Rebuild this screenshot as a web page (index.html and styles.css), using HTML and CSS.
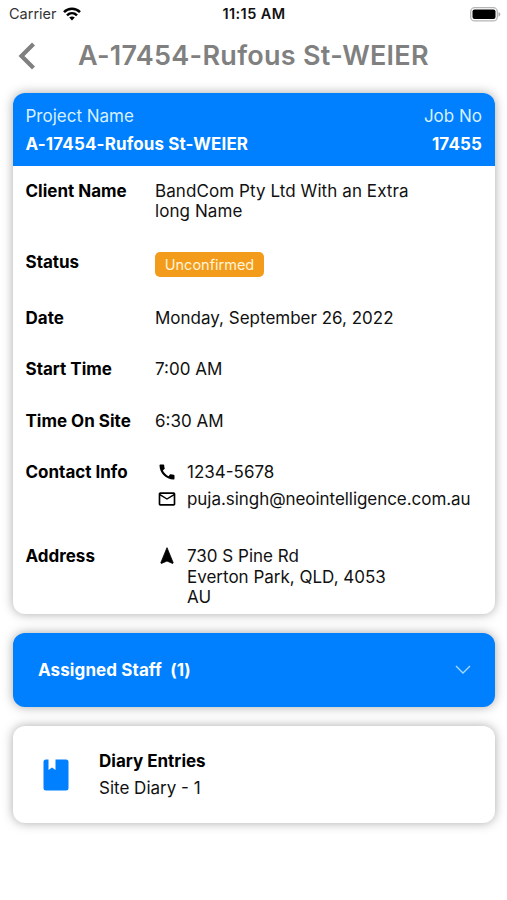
FILE: index.html
```html
<!DOCTYPE html>
<html lang="en">
<head>
<meta charset="utf-8">
<title>Job Details</title>
<link rel="stylesheet" href="styles.css">
</head>
<body>
<div class="status-bar">
  <div class="carrier"><span>Carrier</span>
    <svg class="wifi" viewBox="0 0 18 14" fill="none" stroke="#000" stroke-width="2.5"><path d="M1 5.1C5.5.6 12.500.6 17 5.100"/><path d="M4 8.400c2.900-2.800 7.100-2.800 10 0"/><path d="M6.200 10.500c1.700-1.500 3.900-1.500 5.600 0L9 13.400z" fill="#000" stroke="none"/></svg>
  </div>
  <div class="clock">11:15 AM</div>
  <svg class="battery" viewBox="0 0 31 15"><rect x=".7" y=".7" width="26.600" height="13.200" rx="4" fill="#fff" stroke="#b5b5b5" stroke-width="1.300"/><rect x="2.500" y="2.500" width="23" height="9.600" rx="2" fill="#000"/><path d="M28.500 5c2.400.8 2.400 3.900 0 4.700z" fill="#aaa"/></svg>
</div>
<header class="title-bar">
  <svg class="back" viewBox="0 0 18 28" fill="none" stroke="#808080" stroke-width="4.200"><path d="M15.500 2 3.500 14l12 12"/></svg>
  <h1>A-17454-Rufous St-WEIER</h1>
</header>
<main>
  <section class="card job">
    <div class="job-head">
      <div><div class="caption">Project Name</div><div class="strong"><span class="project">A-17454-Rufous St-WEIER</span></div></div>
      <div class="right"><div class="caption">Job No</div><div class="strong"><span class="number">17455</span></div></div>
    </div>
    <dl class="details">
      <dt>Client Name</dt><dd class="client">BandCom Pty Ltd With an Extra<br>long Name</dd>
      <dt>Status</dt><dd><span class="badge">Unconfirmed</span></dd>
      <dt>Date</dt><dd>Monday, September 26, 2022</dd>
      <dt>Start Time</dt><dd>7:00 AM</dd>
      <dt>Time On Site</dt><dd>6:30 AM</dd>
      <dt>Contact Info</dt>
      <dd>
        <div class="line contact"><svg viewBox="0 0 24 24"><path d="M20.010 15.380c-1.230 0-2.420-.2-3.530-.56-.35-.12-.74-.03-1.010.24l-1.570 1.970c-2.830-1.350-5.480-3.900-6.890-6.830l1.950-1.660c.27-.28.35-.67.24-1.020-.37-1.110-.56-2.300-.56-3.530 0-.54-.45-.99-.99-.99H4.190C3.650 3 3 3.240 3 3.990 3 13.280 10.730 21 20.010 21c.71 0 .99-.63.99-1.180v-3.450c0-.54-.45-.99-.99-.99z"/></svg><span>1234-5678</span></div>
        <div class="line contact"><svg viewBox="0 0 24 24"><path d="M22 6c0-1.100-.9-2-2-2H4c-1.100 0-2 .9-2 2v12c0 1.100.9 2 2 2h16c1.100 0 2-.9 2-2V6zm-2 0-8 5-8-5h16zm0 12H4V8l8 5 8-5v10z"/></svg><span class="email">puja.singh@neointelligence.com.au</span></div>
      </dd>
      <dt>Address</dt>
      <dd><div class="line"><svg viewBox="0 0 24 24"><path d="M12 2 4.500 20.290l.71.71L12 18l6.790 3 .71-.71z" stroke="#000"/></svg><span>730 S Pine Rd<br>Everton Park, QLD, 4053<br>AU</span></div></dd>
    </dl>
  </section>
  <section class="card staff">
    <span>Assigned Staff&nbsp; (1)</span>
    <svg viewBox="0 0 16 10" fill="none" stroke="#a9dcff" stroke-width="1.300"><path d="m1 1 7 7 7-7"/></svg>
  </section>
  <section class="card diary">
    <svg viewBox="0 0 26 32"><path fill="#007fff" d="M3 .5h2.500V11L9 8.500l3.500 2.500V.5H23a2.500 2.500 0 0 1 2.500 2.500v26a2.500 2.500 0 0 1-2.500 2.500H3A2.500 2.500 0 0 1 .5 29V3A2.500 2.500 0 0 1 3 .5z"/></svg>
    <div><div class="diary-title">Diary Entries</div><div>Site Diary - 1</div></div>
  </section>
</main>
</body>
</html>
```

FILE: styles.css
```css
* { box-sizing: border-box; }
body {
  margin: 0;
  min-height: 900px;
  background: #fff;
  color: #111;
  font-family: Inter, "Liberation Sans", sans-serif;
  font-size: 17px;
  line-height: 20.5px;
  white-space: nowrap;
}
svg { display: block; flex: none; }
.status-bar {
  display: grid;
  grid-template-columns: 1fr auto 1fr;
  align-items: center;
  height: 28px;
  padding: 0 7px 0 8px;
  font-size: 14.5px;
}
.carrier { display: flex; align-items: center; gap: 6px; padding-left: 1px; color: #333; }
.wifi { width: 18px; height: 14px; }
.clock { font-weight: 600; color: #111; letter-spacing: .4px; }
.battery { width: 31px; height: 15px; justify-self: end; margin-right: -1px; }
.title-bar {
  display: flex;
  align-items: center;
  height: 56px;
  padding: 0 0 0 18px;
}
.back { width: 18px; height: 28px; }
h1 {
  margin: 0 0 0 42px;
  font-size: 27px;
  line-height: 34px;
  font-weight: 600;
  letter-spacing: .28px;
  color: #808080;
}
main {
  display: flex;
  flex-direction: column;
  gap: 19.500px;
  padding: 8.500px 12px 30px 13px;
}
.card {
  border-radius: 12px;
  background: #fff;
  box-shadow: 0 0 11px rgba(0, 0, 0, .34);
}
.job { height: 521px; overflow: hidden; }
.job-head {
  display: flex;
  justify-content: space-between;
  height: 73px;
  padding: 9px 13px 0 12.500px;
  background: #007fff;
  color: #fff;
  line-height: 28px;
}
.caption { color: #d5f1ff; }
.right { text-align: right; }
.strong, dt, .diary-title, .staff { font-weight: 700; }
.strong { letter-spacing: .13px; }
.details {
  display: grid;
  grid-template-columns: 129.500px 1fr;
  row-gap: 30.800px;
  margin: 0;
  padding: 15px 13px 0 12.500px;
}
dt { color: #000; }
dd { margin: 0; }
.client { letter-spacing: .08px; }
.badge {
  display: block;
  width: 109px;
  height: 25px;
  margin-top: -.5px;
  margin-bottom: .5px;
  border-radius: 5px;
  background: #f39c1b;
  color: #fff4d8;
  font-size: 14.500px;
  line-height: 26px;
  text-align: center;
}
.line { display: flex; gap: 10px; padding-left: 2px; }
.line svg { width: 20px; height: 20px; fill: #000; }
.email { letter-spacing: -.05px; }
.contact { margin-bottom: 6.300px; }
.staff {
  display: flex;
  align-items: center;
  justify-content: space-between;
  height: 73.500px;
  padding: 1px 24px 0 25px;
  background: #007fff;
  color: #fff;
  letter-spacing: .1px;
}
.staff svg { width: 16px; height: 10px; }
.diary {
  display: flex;
  align-items: center;
  gap: 30px;
  height: 97px;
  padding: 1px 0 0 30px;
  line-height: 27px;
}
.diary svg { width: 26px; height: 32px; }
.diary-title { color: #000; }
```
